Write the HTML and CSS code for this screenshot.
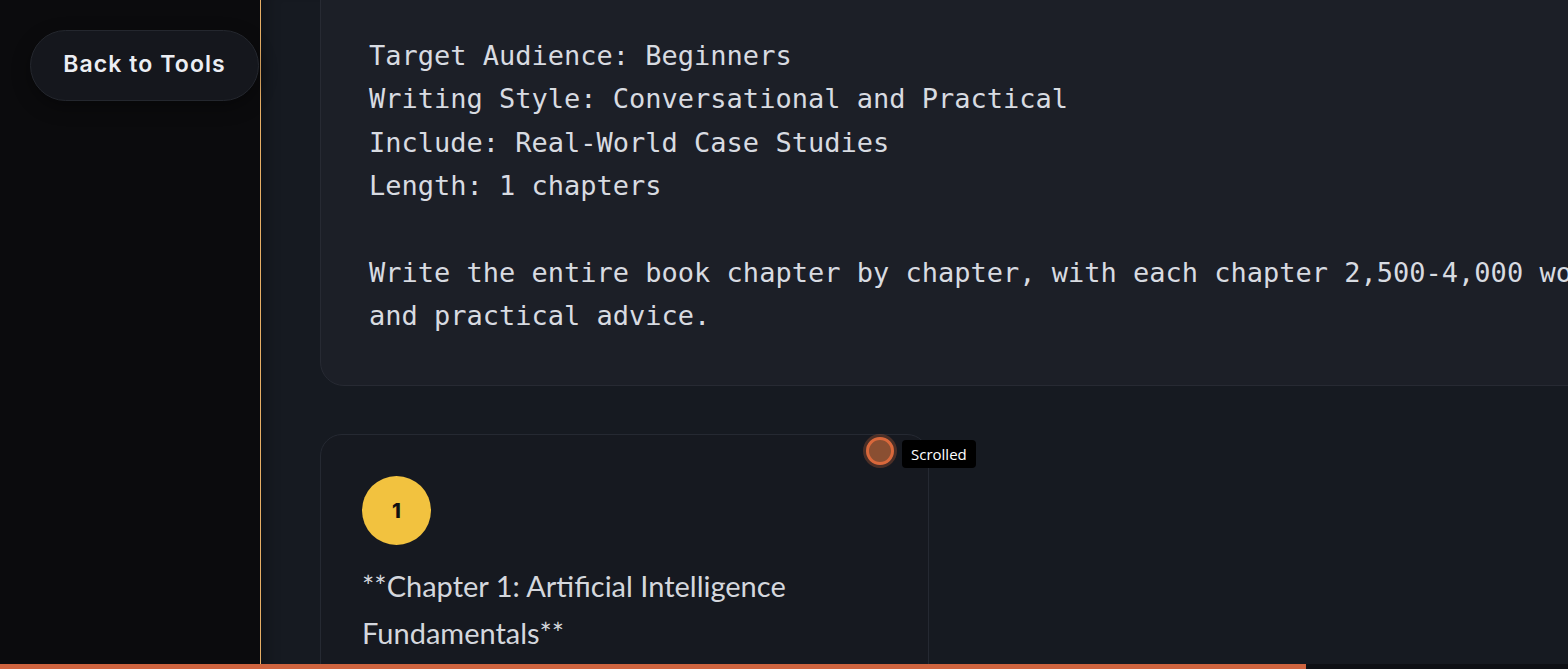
FILE: index.html
```html
<!DOCTYPE html>
<html lang="en">
<head>
    <meta charset="UTF-8">
    <meta name="viewport" content="width=device-width, initial-scale=1.0">
    <title>Book Writer</title>
    <link rel="stylesheet" href="styles.css">
</head>
<body>
    <div class="layout">
        <aside class="sidebar">
            <button class="back-btn">Back to Tools</button>
        </aside>

        <main class="content">
            <div class="prompt-box">Target Audience: Beginners
Writing Style: Conversational and Practical
Include: Real-World Case Studies
Length: 1 chapters

Write the entire book chapter by chapter, with each chapter 2,500-4,000 words, including examples
and practical advice.</div>

            <div class="chapter-card">
                <div class="chapter-num">1</div>
                <h3 class="chapter-title">**Chapter 1: Artificial Intelligence Fundamentals**</h3>

                <span class="scroll-marker"></span>
                <span class="scroll-tip">Scrolled</span>
            </div>
        </main>
    </div>

    <div class="progress">
        <div class="progress-fill" style="width: 83.3%"></div>
    </div>
</body>
</html>
```

FILE: styles.css
```css
html, body {
    margin: 0;
    height: 100%;
    overflow: hidden;
}

body {
    background: #161a21;
    color: #d6d9df;
    font-family: Lato, "Open Sans", sans-serif;
}

.layout {
    display: flex;
    height: 100vh;
}

.sidebar {
    width: 261px;
    flex-shrink: 0;
    background: #0b0b0d;
    border-right: 1px solid #e6ae66;
    padding: 30px 0 0 30px;
    box-sizing: border-box;
}

.back-btn {
    width: 229px;
    height: 71px;
    padding: 0 0 4px;
    border-radius: 36px;
    background: #15171d;
    border: 1px solid #24272e;
    color: #eceef3;
    font-family: Inter, sans-serif;
    font-size: 23px;
    font-weight: 600;
    letter-spacing: 1.1px;
    cursor: pointer;
    box-shadow: 0 6px 18px rgba(0, 0, 0, 0.35);
}

.content {
    flex: 1;
    padding-left: 59px;
    box-shadow: inset 18px 0 14px -12px rgba(0, 0, 0, 0.25);
}

.prompt-box {
    width: 1500px;
    margin-top: -40px;
    padding: 73px 0 48px 48px;
    background: #1c1f27;
    border: 1px solid #272a33;
    border-radius: 24px;
    white-space: pre;
    font-family: "DejaVu Sans Mono", "Liberation Mono", monospace;
    font-size: 27px;
    line-height: 43.33px;
    color: #d8dbe1;
}

.chapter-card {
    position: relative;
    width: 609px;
    margin-top: 48px;
    padding: 41px 40px 40px 41px;
    box-sizing: border-box;
    border: 1px solid #252932;
    border-radius: 22px;
    background: #161920;
    height: 300px;
}

.chapter-num {
    width: 69px;
    height: 69px;
    border-radius: 50%;
    background: #f2c23f;
    color: #111;
    font-family: Inter, sans-serif;
    font-weight: 800;
    font-size: 20px;
    display: flex;
    align-items: center;
    justify-content: center;
}

.chapter-title {
    margin: 17px 0 0;
    font-size: 29px;
    font-weight: 400;
    line-height: 47px;
    color: #d4d7dd;
    width: 480px;
}

.scroll-marker {
    position: absolute;
    left: 545px;
    top: 2px;
    width: 22px;
    height: 22px;
    border-radius: 50%;
    background: #8a4f32;
    border: 3px solid #d9683b;
    box-shadow: 0 0 0 3px rgba(217, 104, 59, 0.28);
}

.scroll-tip {
    position: absolute;
    left: 581px;
    top: 5px;
    padding: 0 9px;
    height: 28px;
    line-height: 28px;
    background: #000;
    color: #fff;
    border-radius: 4px;
    font-family: "Open Sans", sans-serif;
    font-size: 15px;
}

.progress {
    position: fixed;
    left: 0;
    right: 0;
    bottom: 0;
    height: 5px;
    background: #0e1015;
}

.progress-fill {
    height: 100%;
    background: #cf643f;
}
```
